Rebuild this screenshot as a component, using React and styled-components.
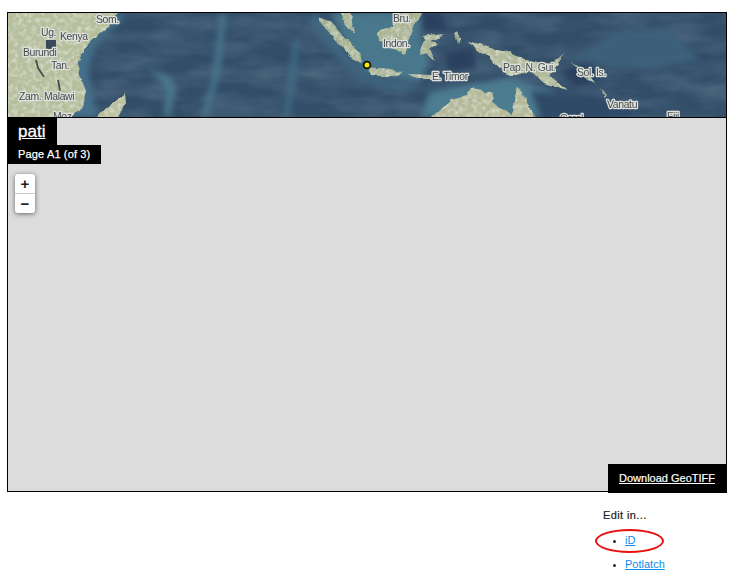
import React from 'react';
import styled, { createGlobalStyle } from 'styled-components';

const GlobalStyle = createGlobalStyle`
  html, body {
    margin: 0;
    padding: 0;
    background: #fff;
    overflow: hidden;
    font-family: "Liberation Sans", Arial, sans-serif;
  }
`
const Page = styled.div`
  padding: 12px 11px 0 7px;
  width: 720px;
`
const Frame = styled.div`
  border: 1px solid #000;
  box-sizing: border-box;
  height: 480px;
  display: flex;
  flex-direction: column;
  position: relative;
  background: #dcdcdc;
`
const Overview = styled.svg`
  display: block;
  width: 718px;
  height: 104px;
  flex: none;
  border-bottom: 1px solid #000;
  box-sizing: content-box;
`
const Sheet = styled.div`
  display: flex;
  flex-direction: column;
  align-items: flex-start;
  flex: 1;
`
const Title = styled.a`
  background: #000;
  color: #fff;
  font-size: 17px;
  -webkit-text-stroke: 0.3px #fff;
  line-height: 27px;
  height: 27px;
  padding: 0 12px 0 10px;
  text-decoration: underline;
`
const SheetLabel = styled.div`
  background: #000;
  color: #fff;
  font-size: 11px;
  letter-spacing: 0.15px;
  -webkit-text-stroke: 0.25px #fff;
  line-height: 19px;
  height: 19px;
  padding: 0 11px 0 10px;
`
const Zoom = styled.div`
  position: absolute;
  left: 7px;
  top: 161px;
  width: 20px;
  border-radius: 3px;
  background: #fff;
  box-shadow: 0 1px 5px rgba(0, 0, 0, 0.55);
`
const ZoomButton = styled.div`
  height: 19px;
  display: flex;
  align-items: center;
  justify-content: center;
  font-size: 15px;
  font-weight: 700;
  color: #222;
  & + & {
    border-top: 1px solid #ccc;
  }
`
const Download = styled.a`
  position: absolute;
  right: -1px;
  bottom: -2px;
  background: #000;
  color: #fff;
  font-size: 11px;
  -webkit-text-stroke: 0.2px #fff;
  line-height: 29px;
  height: 29px;
  padding: 0 12px 0 11px;
  text-decoration: underline;
`
const EditPanel = styled.div`
  margin: 17px 0 0 596px;
  font-size: 11px;
  color: #222;
`
const EditTitle = styled.div`
  line-height: 13px;
  letter-spacing: 0.4px;
  -webkit-text-stroke: 0.2px #222;
`
const EditList = styled.ul`
  margin: 12px 0 0;
  padding: 0 0 0 22px;
  list-style: disc;
`
const EditItem = styled.li`
  line-height: 13px;
  margin-bottom: 11px;
  position: relative;
  &::marker {
    font-size: 9px;
  }
`
const EditLink = styled.a`
  color: #0a8ce8;
  text-decoration: underline;
`
const Highlight = styled.span`
  position: absolute;
  left: -30px;
  top: -5px;
  width: 65px;
  height: 20px;
  border: 2px solid #e8100f;
  border-radius: 50%;
`
const MapLabel = styled.text`
  font-family: "Liberation Sans", Arial, sans-serif;
  font-size: 10.4px;
  letter-spacing: -0.35px;
  fill: #454b4e;
  stroke: #dfe2dc;
  stroke-width: 2.6px;
  paint-order: stroke;
  stroke-linejoin: round;
`

const labels = [
  ['Som.', 96, 23],
  ['Ug.', 41, 36],
  ['Kenya', 60, 40],
  ['Burundi', 23, 56],
  ['Tan.', 51, 69],
  ['Zam.', 19, 100],
  ['Malawi', 44, 100],
  ['Moz.', 53, 120],
  ['Bru.', 393, 22],
  ['Indon.', 383, 47],
  ['E. Timor', 432, 80],
  ['Pap. N. Gui.', 503, 71],
  ['Sol. Is.', 577, 76],
  ['Vanatu', 607, 108],
  ['Coral', 560, 122],
  ['Fiji', 667, 120],
]

const africa = 'M-10 0H128L118 13 108 26 91 40 80 56 78 70 86 90 83 106 71 117 64 130H-10Z'
const madagascar = 'M125 93L126 103 118 117 114 130H90L98 117 108 106 120 98Z'
const australia = 'M432 117L450 100 467 96 473 88 493 93 492 103 512 115 518 85 533 113 537 130H424Z'
const sumatra = 'M317 16L330 20 343 35 360 53 363 63 353 58 337 43 323 26Z'
const malaya = 'M336 0H346L355 33 347 30Z'
const borneo = 'M377 33L393 26 395 16 410 0 426 0 413 30 405 55 390 46 378 41Z'
const java = 'M365 67L390 69 403 74 393 77 373 74Z'
const sunda = 'M407 74L433 75 436 78 418 78Z'
const sulawesi = 'M423 36L443 33 438 38 430 41 438 43 430 50 435 61 427 53 420 55 423 45Z'
const guinea = 'M468 41L483 45 500 50 530 60 550 65 563 53 557 65 550 76 568 90 543 83 530 71 513 76 502 71 490 56 478 51Z'

const OverviewMap = () => (
  <Overview viewBox="8 13 718 104" preserveAspectRatio="none">
    <defs>
      <filter id="softer" filterUnits="userSpaceOnUse" x="-20" y="-20" width="780" height="170">
        <feGaussianBlur stdDeviation="3" />
      </filter>
      <filter id="labelBlur" filterUnits="userSpaceOnUse" x="0" y="0" width="740" height="130">
        <feGaussianBlur stdDeviation="0.3" />
      </filter>
      <filter id="swell" x="0" y="0" width="100%" height="100%">
        <feTurbulence type="fractalNoise" baseFrequency="0.02 0.06" numOctaves="3" seed="8" />
        <feColorMatrix values="0 0 0 0 0.36  0 0 0 0 0.48  0 0 0 0 0.55  0 0 0 0.4 -0.13" />
      </filter>
      <filter id="terrain" filterUnits="userSpaceOnUse" x="-20" y="-10" width="780" height="150">
        <feTurbulence type="fractalNoise" baseFrequency="0.09" numOctaves="3" seed="3" result="warp" />
        <feDisplacementMap in="SourceGraphic" in2="warp" scale="6" xChannelSelector="R" yChannelSelector="G" result="shape" />
        <feTurbulence type="fractalNoise" baseFrequency="0.13" numOctaves="3" seed="5" />
        <feColorMatrix values="0 0 0 0 0.47  0 0 0 0 0.56  0 0 0 0 0.4  0 0 0 1.3 -0.45" result="shade" />
        <feComposite in="shade" in2="shape" operator="in" result="shadeIn" />
        <feTurbulence type="fractalNoise" baseFrequency="0.22" numOctaves="2" seed="14" />
        <feColorMatrix values="0 0 0 0 0.86  0 0 0 0 0.86  0 0 0 0 0.78  0 0 0 1.2 -0.5" result="pale" />
        <feComposite in="pale" in2="shape" operator="in" result="paleIn" />
        <feMerge result="merged">
          <feMergeNode in="shape" />
          <feMergeNode in="shadeIn" />
          <feMergeNode in="paleIn" />
        </feMerge>
        <feGaussianBlur in="merged" stdDeviation="0.5" />
      </filter>
    </defs>
    <rect x="8" y="13" width="718" height="104" fill="#324d68" />
    <rect x="8" y="13" width="718" height="104" filter="url(#swell)" />
    <g filter="url(#softer)">
      <path d="M118 13L92 36 72 60 76 90 66 117H96L92 90 88 70 96 44 126 16Z" fill="#44708a" />
      <path d="M330 13L345 40 365 72 420 82 430 62 420 40 420 13Z" fill="#4a788c" />
      <path d="M430 92L510 78 556 92 545 117H420Z" fill="#4c7b90" />
      <path d="M318 13L345 50 366 76 420 86 436 82 400 92 362 82 330 50 306 20Z" fill="#3f6681" />
      <path d="M420 13L440 13 448 30 424 32Z" fill="#293f5e" />
      <path d="M446 52L474 48 476 68 448 72Z" fill="#293f5e" />
      <path d="M560 70L590 62 600 80 575 88Z" fill="#2a405e" />
      <path d="M570 60L620 30 670 30 700 60 650 70Z" fill="#3d617a" />
      <path d="M530 90L620 100 640 117H540Z" fill="#2f4a68" />
      <path d="M146 68L170 76 176 88 170 117 164 117 166 90 160 80Z" fill="#4a788c" />
      <path d="M220 14L226 14 220 70 208 117 202 117 214 70Z" fill="#487790" />
      <path d="M294 40L299 40 293 90 289 117 284 117 288 90Z" fill="#41708a" />
    </g>
    <g filter="url(#terrain)">
      <path d={africa} fill="#b6bd9a" />
      <path d={madagascar} fill="#bdbf9f" />
      <path d={australia} fill="#b3b796" />
      <path d={sumatra} fill="#a0ad8c" />
      <path d={malaya} fill="#a3ae8e" />
      <path d={borneo} fill="#a9b190" />
      <path d={java} fill="#aab394" />
      <path d={sunda} fill="#a9b297" />
      <path d={sulawesi} fill="#a5b195" />
      <path d="M457 30L460 40 458 44 454 34Z" fill="#96a585" />
      <path d={guinea} fill="#b0b797" />
      <path d="M572 62L590 74 596 84 584 78ZM600 88L606 94 604 98Z" fill="#7d9484" />
    </g>
    <g fill="none" stroke="#3f504b" strokeWidth="1.8">
      <path d="M36 60L38 68 44 77" />
      <path d="M58 80L59 85 60 91" />
    </g>
    <rect x="46" y="40" width="10" height="9" fill="#38495c" />
    <circle cx="367" cy="65" r="3.4" fill="#f6ea00" stroke="#111" strokeWidth="1.8" />
    <g filter="url(#labelBlur)">
      {labels.map(([name, x, y]) => (
        <MapLabel key={name} x={x} y={y}>{name}</MapLabel>
      ))}
    </g>
  </Overview>
)

export default function App() {
  return (
    <Page>
      <GlobalStyle />
      <Frame>
        <OverviewMap />
        <Sheet>
          <Title href="#">pati</Title>
          <SheetLabel>Page A1 (of 3)</SheetLabel>
        </Sheet>
        <Zoom>
          <ZoomButton>+</ZoomButton>
          <ZoomButton>−</ZoomButton>
        </Zoom>
        <Download href="#">Download GeoTIFF</Download>
      </Frame>
      <EditPanel>
        <EditTitle>Edit in...</EditTitle>
        <EditList>
          <EditItem>
            <Highlight />
            <EditLink href="#">iD</EditLink>
          </EditItem>
          <EditItem>
            <EditLink href="#">Potlatch</EditLink>
          </EditItem>
        </EditList>
      </EditPanel>
    </Page>
  );
}
